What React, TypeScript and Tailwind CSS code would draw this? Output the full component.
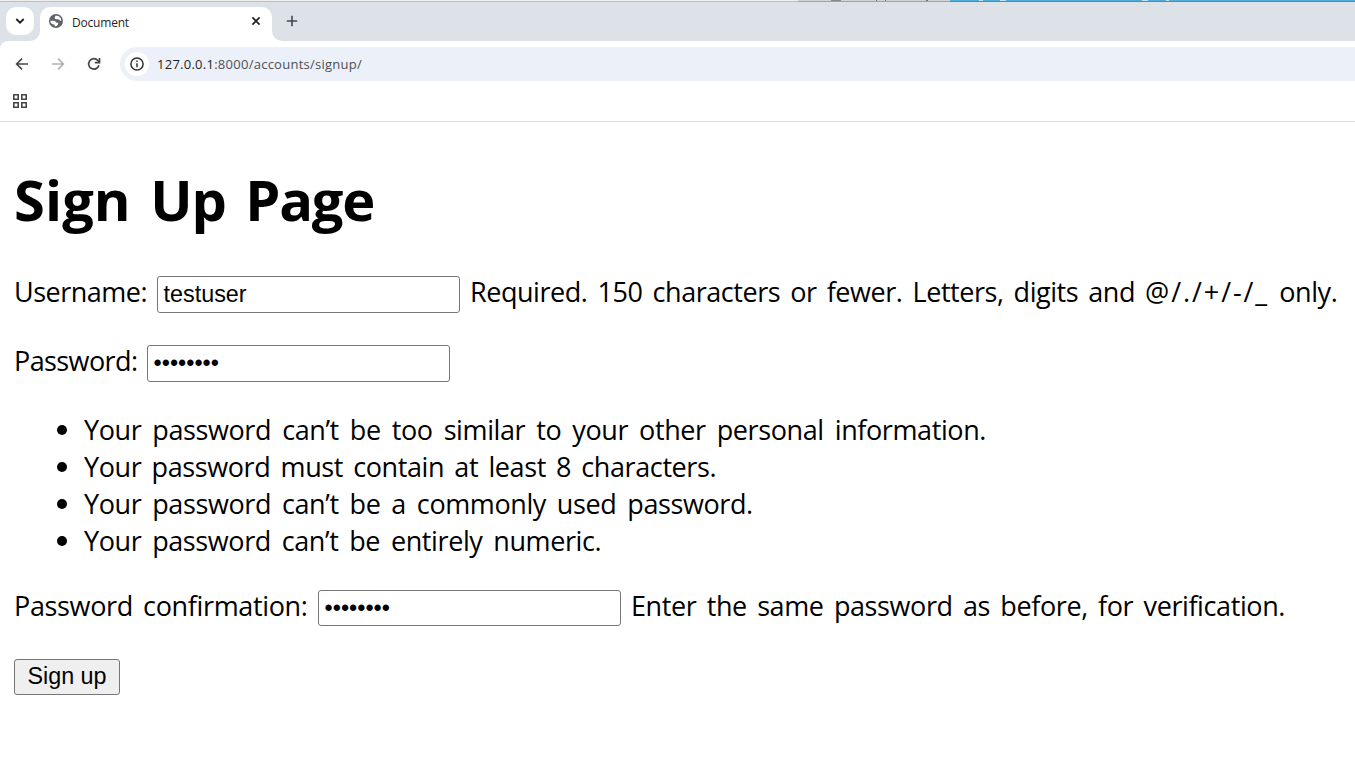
const passwordRules = [
  { text: "Your password can’t be too similar to your other personal information.", spacing: "[word-spacing:4.4px]" },
  { text: "Your password must contain at least 8 characters.", spacing: "[word-spacing:3.6px]" },
  { text: "Your password can’t be a commonly used password.", spacing: "[word-spacing:4.3px]" },
  { text: "Your password can’t be entirely numeric.", spacing: "[word-spacing:4.2px]" },
];

function GlobeIcon() {
  return (
    <svg className="size-[14px] shrink-0" viewBox="0 0 42 42">
      <circle cx="21" cy="21" r="21" fill="#5f6368" />
      <path
        d="M4 20h11c5 0 5 5 8 6h5c0 7-5 11-11 11v-5C8 31 4 27 4 20z M19 5h6c7 1 12 7 12 15h-4c-2-4-5-4-8-4-5 0-8-2-8-5 0-2 2-2 2-6z"
        fill="#fff"
      />
    </svg>
  );
}

function BrowserTabs() {
  return (
    <div className="flex h-[39px] bg-[#dde1e8] pl-[6px] pt-[5px]">
      <div className="flex size-[28px] items-center justify-center rounded-[10px] bg-white">
        <svg className="size-[10px]" viewBox="0 0 10 10" fill="none" stroke="#1f1f1f" strokeWidth="1.8">
          <path d="M1.3 3l3.7 3.7L8.7 3" />
        </svg>
      </div>
      <div className="relative ml-[6px] flex h-[34px] w-[232px] items-start rounded-t-[10px] bg-white pl-[9px] pt-[7px]">
        <svg className="absolute bottom-0 -left-[10px] size-[10px]" viewBox="0 0 10 10">
          <path d="M10 0v10H0A10 10 0 0 0 10 0z" fill="#fff" />
        </svg>
        <svg className="absolute bottom-0 -right-[10px] size-[10px]" viewBox="0 0 10 10">
          <path d="M0 0v10h10A10 10 0 0 1 0 0z" fill="#fff" />
        </svg>
        <GlobeIcon />
        <span className="ml-[9px] w-[179px] text-[12px] leading-[17px] tracking-[-0.2px] text-[#1f1f1f]">Document</span>
        <svg className="mt-[2px] size-[10px]" viewBox="0 0 10 10" stroke="#1f1f1f" strokeWidth="1.6">
          <path d="M1.4 1.4l7.2 7.2M8.6 1.4L1.4 8.6" />
        </svg>
      </div>
      <svg className="ml-[14px] mt-[8px] size-[12px]" viewBox="0 0 12 12" stroke="#474747" strokeWidth="1.6">
        <path d="M6 .8v10.4M.8 6h10.4" />
      </svg>
    </div>
  );
}

function Toolbar() {
  return (
    <div className="bg-[#dde1e8]">
      <div className="flex h-[46px] items-center rounded-tl-[8px] bg-white pl-[14px]">
        <svg className="size-4" viewBox="0 0 16 16" fill="none" stroke="#474747" strokeWidth="1.6">
          <path d="M14 8H2.8M8 2.6L2.6 8 8 13.4" />
        </svg>
        <svg className="ml-[20px] size-4" viewBox="0 0 16 16" fill="none" stroke="#b3b3b3" strokeWidth="1.6">
          <path d="M2 8h11.2M8 2.6L13.4 8 8 13.4" />
        </svg>
        <svg className="ml-[20px] size-4" viewBox="0 0 16 16" fill="none" stroke="#474747" strokeWidth="1.7">
          <path d="M12.9 9.2a5.2 5.2 0 1 1-1.1-4.7L13.4 6M13.5 2v4.6H8.9" />
        </svg>
        <div className="ml-[18px] flex h-[34px] flex-1 items-center rounded-l-full bg-[#ecf0f9] pl-[5px]">
          <div className="flex size-[24px] items-center justify-center rounded-full bg-white">
            <svg className="size-[14px]" viewBox="0 0 14 14" fill="none" stroke="#303134" strokeWidth="1.5">
              <circle cx="7" cy="7" r="6.1" />
              <path d="M7 6.2v4M7 3.5v1.6" />
            </svg>
          </div>
          <div className="ml-[8px] text-[13px] leading-[18px] tracking-[0.26px] text-[#4c4f54]">
            <span className="text-[#1f1f1f]">127.0.0.1</span>:8000/accounts/signup/
          </div>
        </div>
      </div>
    </div>
  );
}

function BookmarksBar() {
  return (
    <div className="h-[35px] border-b border-[#dcdcdc] pl-[13px] pt-[7px]">
      <svg className="size-[14px]" viewBox="0 0 14 14" fill="none" stroke="#474747" strokeWidth="1.6">
        <path d="M.8.8h4.4v4.4H.8zM8.8.8h4.4v4.4H8.8zM.8 8.8h4.4v4.4H.8zM8.8 8.8h4.4v4.4H8.8z" />
      </svg>
    </div>
  );
}

function Field({ value, tight }: { value: string; tight?: boolean }) {
  return (
    <div
      className={`w-[303px] shrink-0 rounded-[3px] border border-[#767676] bg-white pl-[5.6px] font-['Liberation_Sans',sans-serif] text-[23.33px] leading-[34px] tracking-normal [word-spacing:0] ${
        tight ? "mt-[3px] h-[36px]" : "mt-[2px] h-[37px]"
      }`}
    >
      {value}
    </div>
  );
}

export default function App() {
  return (
    <div className="h-[768px] w-[1355px] overflow-hidden bg-white font-['Open_Sans','Noto_Sans',sans-serif]">
      <div className="flex h-[2px] bg-[#dde1e8]">
        <div className="w-[798px] border-b border-[#bfbfbf] bg-[#eeeeee]" />
        <div className="flex w-[152px] border-b border-[#a2a2a2] bg-[#d3d3d3]">
          <div className="ml-[33px] w-[10px] bg-[#858585]" />
          <div className="ml-[35px] w-px bg-[#707070]" />
          <div className="ml-[8px] w-px bg-[#707070]" />
          <div className="ml-[40px] w-[2px] bg-[#707070]" />
        </div>
        <div className="flex flex-1 border-b border-[#4c8fb3] bg-[#50acd9]">
          <div className="ml-[29px] w-[4px] bg-[#c4e2ef]" />
          <div className="ml-[17px] w-[6px] bg-[#c4e2ef]" />
          <div className="ml-[136px] w-[6px] bg-[#c4e2ef]" />
          <div className="ml-[18px] w-[3px] bg-[#c4e2ef]" />
        </div>
      </div>
      <BrowserTabs />
      <Toolbar />
      <BookmarksBar />
      <main className="whitespace-nowrap pl-[14px] pt-[39px] text-[27px] leading-[37px] tracking-[-0.4px] text-black">
        <h1 className="text-[56px] font-bold leading-[76px] tracking-[-1.2px] [word-spacing:6.2px]">
          <span className="tracking-[0.1px]">Sign</span> Up Page
        </h1>
        <div className="mt-[36px] flex h-[40px] items-start">
          <label className="w-[143px] tracking-[-0.5px]">Username:</label>
          <div className="pt-px">
            <Field value="testuser" />
          </div>
          <span className="ml-[10px] [word-spacing:3.5px]">
            <span className="tracking-[-0.45px]">Required. 150 characters or fewer. Letters, digits and</span>{" "}
            <span className="tracking-[1.9px]">@/./+/-/_</span> only.
          </span>
        </div>
        <div className="mt-[29px] flex h-[40px] items-start">
          <label className="w-[133px] tracking-[-0.6px]">Password:</label>
          <div className="pt-px">
            <Field value="••••••••" />
          </div>
        </div>
        <ul className="mt-[29px]">
          {passwordRules.map((rule) => (
            <li key={rule.text} className="flex items-center pl-[43px]">
              <span className="mr-[17px] mt-px size-[10px] rounded-full bg-black" />
              <span className={rule.spacing}>{rule.text}</span>
            </li>
          ))}
        </ul>
        <div className="mt-[28px] flex h-[39px] items-start">
          <label className="w-[304px] tracking-[-0.35px] [word-spacing:3.5px]">Password confirmation:</label>
          <Field value="••••••••" tight />
          <span className="ml-[10px] [word-spacing:3.7px]">Enter the same password as before, for verification.</span>
        </div>
        <button className="mt-[33px] flex h-[36px] w-[106px] items-start justify-center rounded-[3px] border border-[#767676] bg-[#efefef] font-['Liberation_Sans',sans-serif] text-[23.33px] leading-[32px] tracking-normal">
          Sign up
        </button>
      </main>
    </div>
  );
}
